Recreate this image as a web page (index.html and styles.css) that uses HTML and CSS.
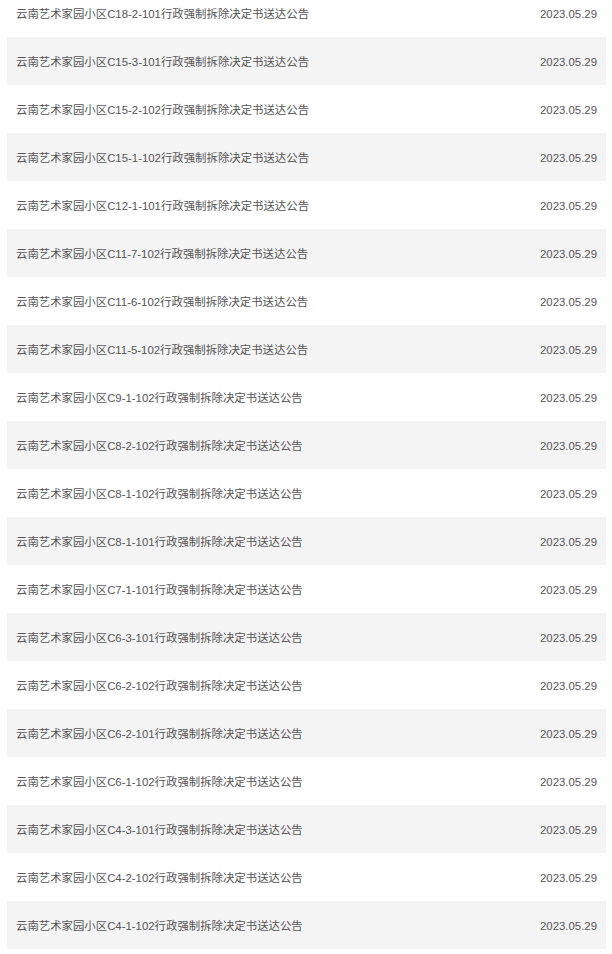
FILE: index.html
```html
<!DOCTYPE html>
<html lang="zh-CN">
<head>
<meta charset="utf-8">
<link rel="stylesheet" href="styles.css">
</head>
<body>
<ul class="news-list">
  <li class="news-item"><span class="title">云南艺术家园小区C18-2-101行政强制拆除决定书送达公告</span><span class="date">2023.05.29</span></li>
  <li class="news-item"><span class="title">云南艺术家园小区C15-3-101行政强制拆除决定书送达公告</span><span class="date">2023.05.29</span></li>
  <li class="news-item"><span class="title">云南艺术家园小区C15-2-102行政强制拆除决定书送达公告</span><span class="date">2023.05.29</span></li>
  <li class="news-item"><span class="title">云南艺术家园小区C15-1-102行政强制拆除决定书送达公告</span><span class="date">2023.05.29</span></li>
  <li class="news-item"><span class="title">云南艺术家园小区C12-1-101行政强制拆除决定书送达公告</span><span class="date">2023.05.29</span></li>
  <li class="news-item"><span class="title">云南艺术家园小区C11-7-102行政强制拆除决定书送达公告</span><span class="date">2023.05.29</span></li>
  <li class="news-item"><span class="title">云南艺术家园小区C11-6-102行政强制拆除决定书送达公告</span><span class="date">2023.05.29</span></li>
  <li class="news-item"><span class="title">云南艺术家园小区C11-5-102行政强制拆除决定书送达公告</span><span class="date">2023.05.29</span></li>
  <li class="news-item"><span class="title">云南艺术家园小区C9-1-102行政强制拆除决定书送达公告</span><span class="date">2023.05.29</span></li>
  <li class="news-item"><span class="title">云南艺术家园小区C8-2-102行政强制拆除决定书送达公告</span><span class="date">2023.05.29</span></li>
  <li class="news-item"><span class="title">云南艺术家园小区C8-1-102行政强制拆除决定书送达公告</span><span class="date">2023.05.29</span></li>
  <li class="news-item"><span class="title">云南艺术家园小区C8-1-101行政强制拆除决定书送达公告</span><span class="date">2023.05.29</span></li>
  <li class="news-item"><span class="title">云南艺术家园小区C7-1-101行政强制拆除决定书送达公告</span><span class="date">2023.05.29</span></li>
  <li class="news-item"><span class="title">云南艺术家园小区C6-3-101行政强制拆除决定书送达公告</span><span class="date">2023.05.29</span></li>
  <li class="news-item"><span class="title">云南艺术家园小区C6-2-102行政强制拆除决定书送达公告</span><span class="date">2023.05.29</span></li>
  <li class="news-item"><span class="title">云南艺术家园小区C6-2-101行政强制拆除决定书送达公告</span><span class="date">2023.05.29</span></li>
  <li class="news-item"><span class="title">云南艺术家园小区C6-1-102行政强制拆除决定书送达公告</span><span class="date">2023.05.29</span></li>
  <li class="news-item"><span class="title">云南艺术家园小区C4-3-101行政强制拆除决定书送达公告</span><span class="date">2023.05.29</span></li>
  <li class="news-item"><span class="title">云南艺术家园小区C4-2-102行政强制拆除决定书送达公告</span><span class="date">2023.05.29</span></li>
  <li class="news-item"><span class="title">云南艺术家园小区C4-1-102行政强制拆除决定书送达公告</span><span class="date">2023.05.29</span></li>
</ul>
</body>
</html>
```
FILE: styles.css
```css
html, body {
  margin: 0;
  padding: 0;
  background: #ffffff;
}
body {
  font-family: "Liberation Sans", "Noto Sans CJK SC", sans-serif;
  font-size: 11.4px;
  line-height: 16px;
  color: #555555;
}
.news-list {
  list-style: none;
  margin: -11px 0 0 0;
  padding: 0 6px 0 7px;
}
.news-item {
  display: flex;
  justify-content: space-between;
  align-items: center;
  height: 48px;
  padding: 0 9px;
}
.news-item:nth-child(even) {
  background: #f4f4f4;
}
.title {
  white-space: nowrap;
  padding-top: 1px;
}
.date {
  white-space: nowrap;
  padding-top: 1px;
}
```
